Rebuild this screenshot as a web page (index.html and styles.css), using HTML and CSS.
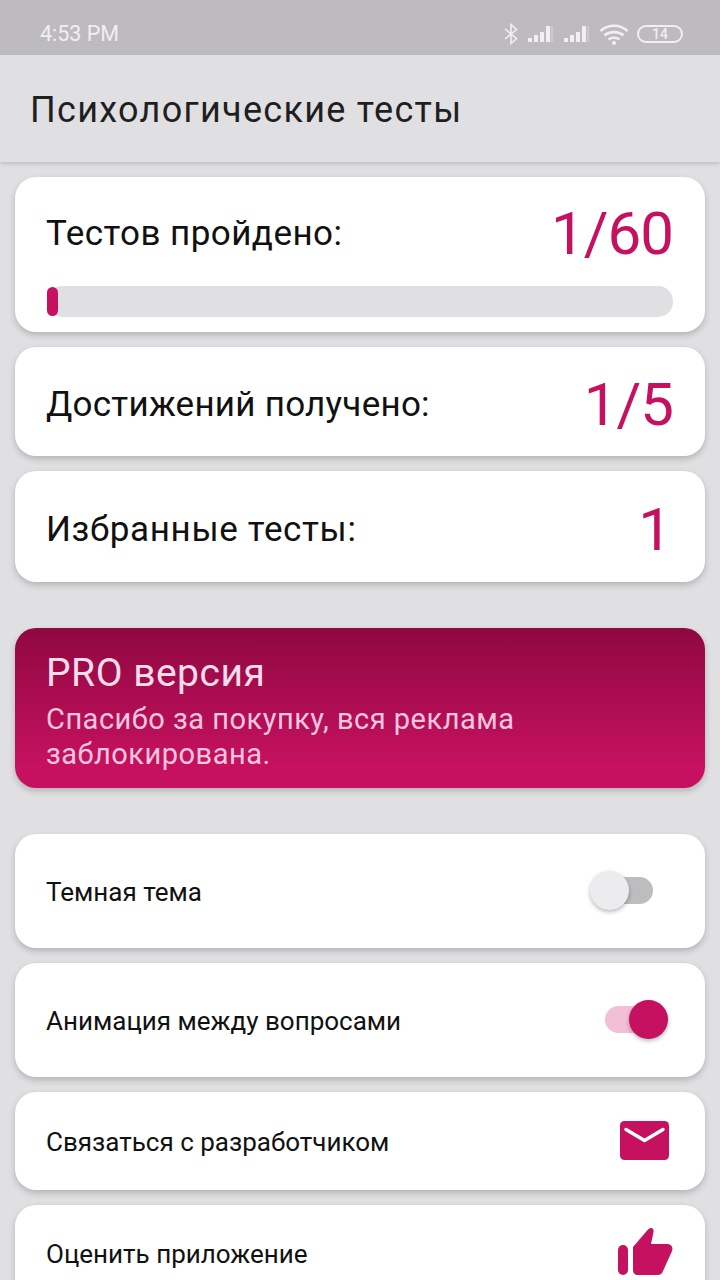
FILE: index.html
```html
<!DOCTYPE html>
<html lang="ru">
  <head>
    <meta charset="UTF-8" />
    <meta name="viewport" content="width=device-width, initial-scale=1.0" />
    <title>Психологические тесты</title>
    <link rel="stylesheet" href="styles.css">
  </head>
  <body>
    <div class="status-bar">
      <span class="status-time">4:53 PM</span>
      <div class="status-icons">
        <svg width="16" height="24" viewBox="0 0 16 24" fill="none" stroke="#f0eff1" stroke-width="1.6"><path d="M2 7 13.500 16.500 8 21.500V2.500l5.500 5L2 17"/></svg>
        <svg class="signal" width="28" height="20" viewBox="0 0 28 20" fill="#f0eff1"><rect x="1" y="14" width="4" height="4"/><rect x="7" y="11" width="4" height="7"/><rect x="13" y="8" width="4" height="10"/><rect x="19" y="2" width="4" height="16"/><rect x="24" y="2" width="2" height="16" opacity=".3"/></svg>
        <svg class="signal" width="28" height="20" viewBox="0 0 28 20" fill="#f0eff1"><rect x="1" y="14" width="4" height="4"/><rect x="7" y="11" width="4" height="7"/><rect x="13" y="8" width="4" height="10"/><rect x="19" y="2" width="4" height="16"/><rect x="24" y="2" width="2" height="16" opacity=".3"/></svg>
        <svg width="30" height="22" viewBox="0 0 30 22" fill="none" stroke="#f0eff1" stroke-width="2.600"><path d="M1.500 8c7.500-7 19.500-7 27 0"/><path d="M5.500 12.500c5-4.500 14-4.500 19 0"/><path d="M9.500 16.500c3-2.300 8-2.300 11 0"/><circle cx="15" cy="20" r="2" fill="#f0eff1" stroke="none"/></svg>
        <div class="battery">14</div>
      </div>
    </div>

    <header class="app-bar">Психологические тесты</header>

    <main class="content">
      <section class="card card-progress">
        <div class="stat-row">
          <span class="stat-label">Тестов пройдено:</span>
          <span class="stat-value">1/60</span>
        </div>
        <div class="progress"><div class="progress-fill"></div></div>
      </section>

      <section class="card card-stat card-stat-a">
        <span class="stat-label">Достижений получено:</span>
        <span class="stat-value">1/5</span>
      </section>

      <section class="card card-stat card-stat-b">
        <span class="stat-label">Избранные тесты:</span>
        <span class="stat-value stat-single">1</span>
      </section>

      <section class="pro">
        <div class="pro-title">PRO версия</div>
        <div class="pro-text">Спасибо за покупку, вся реклама заблокирована.</div>
      </section>

      <section class="card row row-tall">
        <span>Темная тема</span>
        <div class="switch"><div class="track"></div><div class="thumb"></div></div>
      </section>

      <section class="card row row-tall">
        <span>Анимация между вопросами</span>
        <div class="switch switch-on"><div class="track"></div><div class="thumb"></div></div>
      </section>

      <section class="card row row-short">
        <span>Связаться с разработчиком</span>
        <svg class="row-icon" width="50" height="40" viewBox="0 0 50 40"><rect width="49" height="39" rx="4.500" fill="#c5115f"/><path d="M6 8.500 24.500 19.500 43 8.500" fill="none" stroke="#fff" stroke-width="3.500" stroke-linecap="round" stroke-linejoin="round"/></svg>
      </section>

      <section class="card row row-short row-last">
        <span>Оценить приложение</span>
        <svg class="row-icon" width="56" height="50" viewBox="0 0 56 50" fill="#c5115f"><rect x="0" y="18" width="10" height="30" rx="5"/><path d="M15 20 30 2.500C33 -.5 36 1 35.500 5L33 17H48.500C53 17 55.500 20 54 24L45 44C44 47 42 48 39 48H20C17 48 15 46 15 43Z"/></svg>
      </section>
    </main>
  </body>
</html>
```

FILE: styles.css
```css
* {
  box-sizing: border-box;
}

html,
body {
  height: 1280px;
  margin: 0;
  overflow: hidden;
}

body {
  font-family: Roboto, "Noto Sans", sans-serif;
  background-color: #e0e0e2;
  color: #111;
}

.status-bar {
  height: 55px;
  background-color: #bdbbbe;
  color: #f0eff1;
  display: flex;
  align-items: center;
  justify-content: space-between;
  padding: 12px 37px 0 40px;
  font-size: 21.5px;
}

.status-icons {
  display: flex;
  align-items: center;
  gap: 8px;
}

.battery {
  width: 46px;
  height: 18px;
  border: 2px solid #f0eff1;
  border-radius: 9px;
  font-size: 14px;
  line-height: 14px;
  font-weight: 500;
  text-align: center;
}

.app-bar {
  height: 107px;
  background-color: #e0dfe2;
  box-shadow: 0 2px 4px rgba(0, 0, 0, 0.14);
  display: flex;
  align-items: center;
  padding: 2px 0 0 30px;
  font-size: 36px;
  color: #1f1f22;
  letter-spacing: 1.3px;
  position: relative;
}

.content {
  padding: 15px 15px 0;
  display: flex;
  flex-direction: column;
  gap: 15px;
}

.card {
  background: white;
  border-radius: 21px;
  box-shadow: 0 3px 6px rgba(0, 0, 0, 0.2);
  flex-shrink: 0;
}

.card-progress {
  height: 155px;
  padding: 25px 32px 0 31px;
}

.stat-row,
.card-stat {
  display: flex;
  align-items: center;
  justify-content: space-between;
}

.stat-row {
  height: 62px;
}

.card-stat {
  padding: 6px 32px 0 31px;
}

.card-stat-a {
  height: 109px;
}

.card-stat-b {
  height: 111px;
}

.stat-label {
  font-size: 35px;
  letter-spacing: 0.45px;
}

.card-stat-a .stat-label {
  letter-spacing: 0.25px;
}

.card-stat-b .stat-label {
  letter-spacing: 0.65px;
}

.stat-value {
  font-size: 60px;
  color: #c5115f;
  letter-spacing: -1px;
}

.stat-single {
  padding-right: 2px;
}

.progress {
  height: 31px;
  margin: 22px 0 0 1px;
  background-color: #e0dfe1;
  border-radius: 15px;
}

.progress-fill {
  width: 11px;
  height: 29px;
  background-color: #c5115f;
  border-radius: 6px;
  position: relative;
  top: 1px;
}

.pro {
  height: 160px;
  margin: 31px 0;
  padding: 22px 32px 0 31px;
  border-radius: 21px;
  background: linear-gradient(#8f0840, #c5115f 85%);
  box-shadow: 0 3px 6px rgba(0, 0, 0, 0.2);
  flex-shrink: 0;
}

.pro-title {
  font-size: 39px;
  line-height: 46px;
  color: #f8dcea;
  letter-spacing: 0.5px;
}

.pro-text {
  font-size: 29px;
  line-height: 35px;
  margin-top: 6px;
  color: #f8c6de;
  letter-spacing: 0.5px;
}

.row {
  display: flex;
  align-items: center;
  justify-content: space-between;
  padding: 2px 35px 0 31px;
  font-size: 26px;
}

.row-tall {
  height: 114px;
}

.row-short {
  height: 98px;
}

.row-last {
  height: 110px;
  align-items: flex-start;
  padding-top: 34px;
}

.row-short .row-icon {
  margin-top: -2px;
}

.row-last .row-icon {
  margin-top: -12px;
  margin-right: -4px;
}

.switch {
  width: 78px;
  height: 40px;
  position: relative;
  margin-top: -2px;
  margin-right: 2px;
}

.track {
  position: absolute;
  left: 15px;
  top: 6px;
  width: 48px;
  height: 27px;
  border-radius: 14px;
  background-color: #bdbcbe;
}

.thumb {
  position: absolute;
  left: 0;
  top: 0;
  width: 39px;
  height: 39px;
  border-radius: 50%;
  background-color: #ecebee;
  box-shadow: 0 2px 4px rgba(0, 0, 0, 0.28);
}

.switch-on .track {
  background-color: #f3bfd7;
}

.switch-on .thumb {
  left: 39px;
  background-color: #c5115f;
}
```
